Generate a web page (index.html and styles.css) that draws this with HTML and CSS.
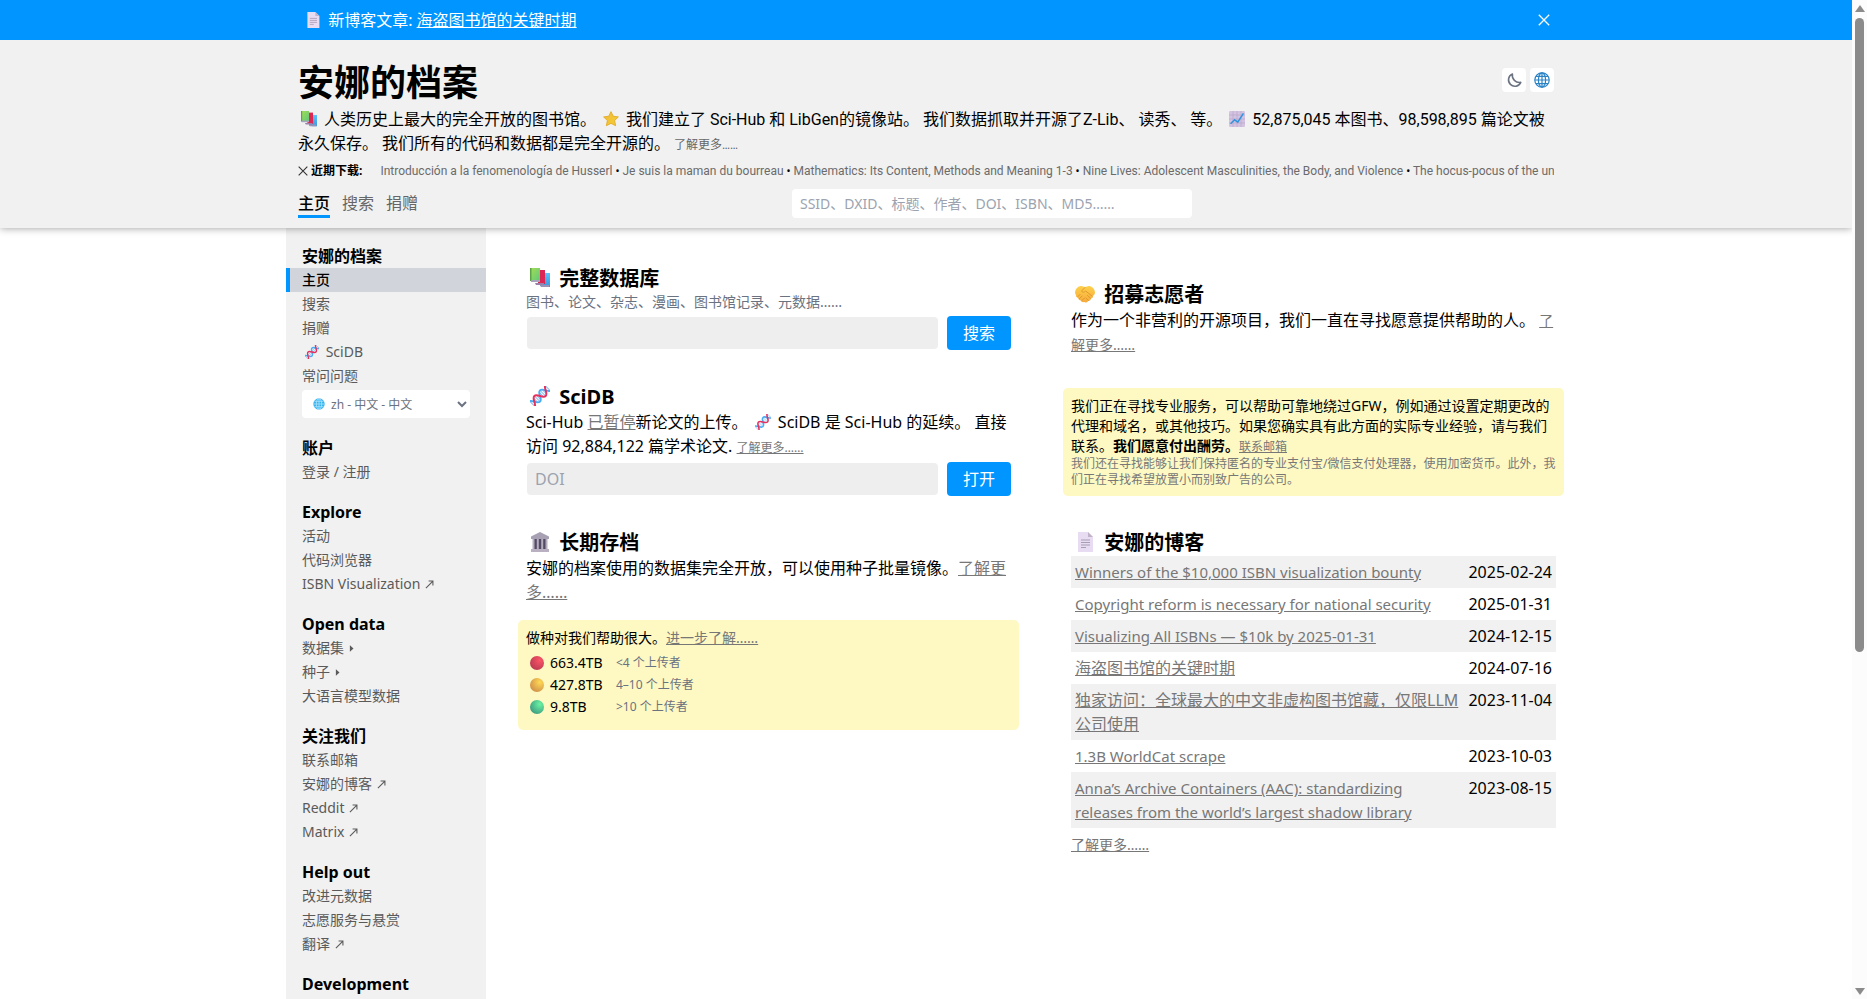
FILE: index.html
```html
<!DOCTYPE html>
<html lang="zh-CN">
<head>
<meta charset="utf-8">
<title>安娜的档案</title>
<link rel="stylesheet" href="styles.css">
</head>
<body>
<svg class="defs" aria-hidden="true">
  <defs>
    <linearGradient id="g-green" x1="0" y1="0" x2="1" y2="1"><stop offset="0" stop-color="#a5dd55"/><stop offset="1" stop-color="#5fc97a"/></linearGradient>
    <linearGradient id="g-blue" x1="0" y1="0" x2="0" y2="1"><stop offset="0" stop-color="#5cc4fb"/><stop offset="1" stop-color="#3a97dc"/></linearGradient>
    <linearGradient id="g-star" x1="0" y1="0" x2="1" y2="1"><stop offset="0" stop-color="#f0b83c"/><stop offset="1" stop-color="#f5cf31"/></linearGradient>
    <linearGradient id="g-hand" x1="0" y1="0" x2="0" y2="1"><stop offset="0" stop-color="#ffd04a"/><stop offset="1" stop-color="#f5ab3a"/></linearGradient>
    <radialGradient id="g-red-dot" cx=".7" cy=".3" r=".8"><stop offset="0" stop-color="#fb5566"/><stop offset="1" stop-color="#b93a52"/></radialGradient>
    <radialGradient id="g-yellow-dot" cx=".7" cy=".3" r=".8"><stop offset="0" stop-color="#ffd955"/><stop offset="1" stop-color="#cf8f4a"/></radialGradient>
    <radialGradient id="g-green-dot" cx=".7" cy=".3" r=".8"><stop offset="0" stop-color="#6bf3a2"/><stop offset="1" stop-color="#3d9a80"/></radialGradient>
    <symbol id="i-doc" viewBox="0 0 20 20"><path d="M3 0h10l5 5v15H3z" fill="#e7dcf1"/><path d="M13 0l5 5h-5z" fill="#bfb2c9"/><path d="M6 8h9M6 10.500h9M6 13h9M6 15.500h5" stroke="#a99cb5" stroke-width="1"/></symbol>
    <symbol id="i-books" viewBox="0 0 20 20"><path d="M12 5h8v14h-6l-4-1z" fill="url(#g-blue)"/><path d="M10 17h9v2h-8z" fill="#9a93b8"/><path d="M8 2h7v14H8z" fill="#dc2755"/><path d="M5 15h9v2H6z" fill="#9a7fa8"/><path d="M0 0h10v13H0z" fill="url(#g-green)"/><path d="M0 0h1.500v13H0z" fill="#5ba345"/><path d="M1 12h9v2H1z" fill="#a7a5bd"/></symbol>
    <symbol id="i-star" viewBox="0 0 20 20"><path d="M10 .8l2.800 5.800 6.400.8-4.700 4.500 1.300 6.500-5.800-3-5.800 3 1.300-6.500L.8 7.400l6.400-.8z" fill="url(#g-star)" stroke="#e2ad2c" stroke-width="1.200" stroke-linejoin="round"/></symbol>
    <symbol id="i-chart" viewBox="0 0 20 20"><rect width="20" height="20" rx="1.500" fill="#d3c3e0"/><path d="M5 0v20M10 0v20M15 0v20M0 5h20M0 10h20M0 15h20" stroke="#b7a5c9" stroke-width=".8"/><path d="M2 16l5-5 4 3 7-11" fill="none" stroke="#3294df" stroke-width="2"/></symbol>
    <symbol id="i-dna" viewBox="0 0 20 20"><g transform="rotate(-45 10 10)" fill="none"><path d="M-1 7v6M4 7v6M6 7v6M8 8v4M12 8v4M14 7v6M16 7v6M21 7v6" stroke="#8fbdf0" stroke-width="1"/><path d="M-2 6C2 6 2 14 6 14S10 6 14 6S18 14 22 14" stroke="#4aacf5" stroke-width="2"/><path d="M-2 14C2 14 2 6 6 6S10 14 14 14S18 6 22 6" stroke="#e4325f" stroke-width="2"/></g></symbol>
    <symbol id="i-bank" viewBox="0 0 20 20"><path d="M10 0l9 4.500V7H1V4.500z" fill="#a8a1b4"/><path d="M3 7h14v10H3z" fill="#554a66"/><path d="M3.500 7v10M7.800 7v10M12.200 7v10M16.500 7v10" stroke="#b5aebe" stroke-width="2"/><path d="M1 17h18v3H1z" fill="#b9b1c2"/></symbol>
    <symbol id="i-hands" viewBox="0 0 20 20"><path d="M0 8.500C.3 5 2.500 2.500 5.500 2c2-.2 3 .8 4.500 1C11.500 2.800 12.500 1.800 14.500 2c3 .5 5.200 3 5.500 6.500 0 1.500-1 2.500-2 3.300.3 1.600-.8 2.700-2.200 2.900-.2 1.500-1.400 2.300-2.700 2.200-.8 1.500-2.500 1.900-4 1.100-1.500.5-2.800-.3-3.200-1.500-1.600 0-2.600-1-2.700-2.500C1.500 13.500.8 12.500 1 11 .4 10.300 0 9.500 0 8.500z" fill="url(#g-hand)"/><path d="M10 3.500L6.500 7c.8 1.800 2.800 1.500 4.200 0l6.300 5M3 12.500l2-2M4.500 14.500l2.500-2.500M7 16.500l2.500-2.500M11 14l2.500 2.500M12.500 11.500l3 2.800" fill="none" stroke="#dd9430" stroke-width=".9" stroke-linecap="round"/></symbol>
    <symbol id="i-globe" viewBox="0 0 20 20"><circle cx="10" cy="10" r="9" fill="#fff"/><g fill="none" stroke="#2b83c6" stroke-width="1.500"><circle cx="10" cy="10" r="9"/><ellipse cx="10" cy="10" rx="4.500" ry="9"/><path d="M10 1v18M1 10h18M2.500 5.500h15M2.500 14.500h15"/></g></symbol>
    <symbol id="i-globe-solid" viewBox="0 0 20 20"><circle cx="10" cy="10" r="9.500" fill="#36b4f0"/><g fill="none" stroke="#b5e8ff" stroke-width="1.200"><ellipse cx="10" cy="10" rx="4.500" ry="9"/><path d="M10 1v18M1 10h18M2.500 5.500h15M2.500 14.500h15"/></g></symbol>
    <symbol id="i-moon" viewBox="0 0 20 20"><path d="M8 2.500A8 8 0 1 0 18.500 13 9 9 0 0 1 8 2.500z" fill="none" stroke="#6b7280" stroke-width="2" stroke-linejoin="round"/></symbol>
    <symbol id="i-x" viewBox="0 0 12 12"><path d="M.8.800l10.400 10.400M11.200.800L.8 11.200" fill="none" stroke="currentColor" stroke-width="1.300"/></symbol>
    <symbol id="i-ne" viewBox="0 0 10 10"><path d="M1 9l7.500-7.500M4 1.200h4.800V6" fill="none" stroke="currentColor" stroke-width="1.200"/></symbol>
    <symbol id="i-tri" viewBox="0 0 10 10"><path d="M1 1.500L5 5 1 8.500z" fill="currentColor"/></symbol>
  </defs>
</svg>
<div class="viewport">
  <div class="page">
    <div class="banner">
      <div class="banner-inner">
        <span><svg class="em"><use href="#i-doc"/></svg> 新博客文章: <a href="#">海盗图书馆的关键时期</a></span>
        <button class="close" aria-label="关闭"><svg><use href="#i-x"/></svg></button>
      </div>
    </div>
    <header class="header">
      <div class="header-inner">
        <div class="title-row">
          <h1>安娜的档案</h1>
          <div class="tools">
            <button aria-label="深色模式"><svg><use href="#i-moon"/></svg></button>
            <button aria-label="语言"><svg><use href="#i-globe"/></svg></button>
          </div>
        </div>
        <p class="tagline"><svg class="em"><use href="#i-books"/></svg> 人类历史上最大的完全开放的图书馆。 <svg class="em"><use href="#i-star"/></svg> 我们建立了 Sci-Hub 和 LibGen的镜像站。 我们数据抓取并开源了Z-Lib、 读秀、 等。 <svg class="em"><use href="#i-chart"/></svg> 52,875,045 本图书、98,598,895 篇论文被永久保存。 我们所有的代码和数据都是完全开源的。 <a class="more" href="#">了解更多……</a></p>
        <div class="recent">
          <button class="recent-x" aria-label="隐藏"><svg><use href="#i-x"/></svg></button>
          <strong>近期下载:</strong>
          <div class="ticker"><a href="#">Introducción a la fenomenología de Husserl</a> • <a href="#">Je suis la maman du bourreau</a> • <a href="#">Mathematics: Its Content, Methods and Meaning 1-3</a> • <a href="#">Nine Lives: Adolescent Masculinities, the Body, and Violence</a> • <a href="#">The hocus-pocus of the un</a></div>
        </div>
        <div class="bar">
          <nav class="tabs"><a class="on" href="#">主页</a><a href="#">搜索</a><a href="#">捐赠</a></nav>
          <input class="search" type="text" aria-label="搜索" placeholder="SSID、DXID、标题、作者、DOI、ISBN、MD5……">
        </div>
      </div>
    </header>
    <div class="body">
      <aside class="side">
        <section>
          <h2>安娜的档案</h2>
          <a class="on" href="#">主页</a>
          <a href="#">搜索</a>
          <a href="#">捐赠</a>
          <a href="#"><svg class="em"><use href="#i-dna"/></svg> SciDB</a>
          <a href="#">常问问题</a>
          <div class="lang"><svg class="lang-icon"><use href="#i-globe-solid"/></svg><select aria-label="语言"><option>zh - 中文 - 中文</option></select></div>
        </section>
        <section><h2>账户</h2><a href="#">登录 / 注册</a></section>
        <section><h2>Explore</h2><a href="#">活动</a><a href="#">代码浏览器</a><a href="#">ISBN Visualization <svg class="mark"><use href="#i-ne"/></svg></a></section>
        <section><h2>Open data</h2><a href="#">数据集 <svg class="mark"><use href="#i-tri"/></svg></a><a href="#">种子 <svg class="mark"><use href="#i-tri"/></svg></a><a href="#">大语言模型数据</a></section>
        <section><h2>关注我们</h2><a href="#">联系邮箱</a><a href="#">安娜的博客 <svg class="mark"><use href="#i-ne"/></svg></a><a href="#">Reddit <svg class="mark"><use href="#i-ne"/></svg></a><a href="#">Matrix <svg class="mark"><use href="#i-ne"/></svg></a></section>
        <section><h2>Help out</h2><a href="#">改进元数据</a><a href="#">志愿服务与悬赏</a><a href="#">翻译 <svg class="mark"><use href="#i-ne"/></svg></a></section>
        <section><h2>Development</h2></section>
      </aside>
      <main class="main">
        <div class="col">
          <section class="block">
            <h3><svg class="em"><use href="#i-books"/></svg> 完整数据库</h3>
            <p class="sub">图书、论文、杂志、漫画、图书馆记录、元数据……</p>
            <form class="form"><input type="text" aria-label="搜索"><button type="button">搜索</button></form>
          </section>
          <section class="block">
            <h3><svg class="em"><use href="#i-dna"/></svg> SciDB</h3>
            <p>Sci-Hub <a href="#">已暂停</a>新论文的上传。 <svg class="em"><use href="#i-dna"/></svg> SciDB 是 Sci-Hub 的延续。 直接访问 92,884,122 篇学术论文. <a class="tiny" href="#">了解更多……</a></p>
            <form class="form"><input type="text" aria-label="DOI" placeholder="DOI"><button type="button">打开</button></form>
          </section>
          <section class="block">
            <h3><svg class="em"><use href="#i-bank"/></svg> 长期存档</h3>
            <p>安娜的档案使用的数据集完全开放，可以使用种子批量镜像。<a href="#">了解更多……</a></p>
            <div class="note seeds">
              <p>做种对我们帮助很大。<a href="#">进一步了解……</a></p>
              <ul>
                <li><svg class="dot"><circle cx="7" cy="7" r="7" fill="url(#g-red-dot)"/></svg><span class="size">663.4TB</span><small>&lt;4 个上传者</small></li>
                <li><svg class="dot"><circle cx="7" cy="7" r="7" fill="url(#g-yellow-dot)"/></svg><span class="size">427.8TB</span><small>4–10 个上传者</small></li>
                <li><svg class="dot"><circle cx="7" cy="7" r="7" fill="url(#g-green-dot)"/></svg><span class="size">9.8TB</span><small>&gt;10 个上传者</small></li>
              </ul>
            </div>
          </section>
        </div>
        <div class="col right">
          <section class="block volunteer">
            <h3><svg class="em"><use href="#i-hands"/></svg> 招募志愿者</h3>
            <p>作为一个非营利的开源项目，我们一直在寻找愿意提供帮助的人。 <a class="small" href="#">了解更多……</a></p>
          </section>
          <div class="note pro">
            <p>我们正在寻找专业服务，可以帮助可靠地绕过GFW，例如通过设置定期更改的代理和域名，或其他技巧。如果您确实具有此方面的实际专业经验，请与我们联系。<strong>我们愿意付出酬劳。</strong><a class="tiny" href="#">联系邮箱</a></p>
            <p class="fine">我们还在寻找能够让我们保持匿名的专业支付宝/微信支付处理器，使用加密货币。此外，我们正在寻找希望放置小而别致广告的公司。</p>
          </div>
          <section class="block">
            <h3><svg class="em"><use href="#i-doc"/></svg> 安娜的博客</h3>
            <table class="posts">
              <tr><td><a class="latin" href="#">Winners of the $10,000 ISBN visualization bounty</a></td><td>2025-02-24</td></tr>
              <tr><td><a class="latin" href="#">Copyright reform is necessary for national security</a></td><td>2025-01-31</td></tr>
              <tr><td><a class="latin" href="#">Visualizing All ISBNs — $10k by 2025-01-31</a></td><td>2024-12-15</td></tr>
              <tr><td><a href="#">海盗图书馆的关键时期</a></td><td>2024-07-16</td></tr>
              <tr><td><a href="#">独家访问：全球最大的中文非虚构图书馆藏，仅限LLM公司使用</a></td><td>2023-11-04</td></tr>
              <tr><td><a class="latin" href="#">1.3B WorldCat scrape</a></td><td>2023-10-03</td></tr>
              <tr><td><a class="latin" href="#">Anna’s Archive Containers (AAC): standardizing releases from the world’s largest shadow library</a></td><td>2023-08-15</td></tr>
            </table>
            <p class="after"><a class="small" href="#">了解更多……</a></p>
          </section>
        </div>
      </main>
    </div>
  </div>
  <div class="scrollbar" aria-hidden="true"><i class="up"></i><i class="thumb"></i><i class="down"></i></div>
</div>
</body>
</html>
```

FILE: styles.css
```css
* { box-sizing: border-box; }
body {
  margin: 0;
  color: #000;
  background: #fff;
  font: 16px/24px "Noto Sans", "Noto Sans CJK SC", sans-serif;
}
h1, h2, h3, p, ul { margin: 0; padding: 0; }
a { color: inherit; }
button, input, select { font: inherit; margin: 0; border: 0; }
.defs { position: absolute; width: 0; height: 0; }
.viewport { display: flex; height: 100vh; overflow: hidden; }
.page { flex: 1; min-width: 0; }
.em { width: 1em; height: 1em; margin: 0 3px 0 3px; vertical-align: -2px; }

.banner { background: #0095ff; color: #fff; }
.banner-inner {
  display: flex;
  justify-content: space-between;
  align-items: center;
  max-width: 1280px;
  height: 40px;
  margin: 0 auto;
  padding: 0 16px;
}
.close { display: flex; padding: 0; background: none; color: #fff; }
.close svg { width: 12px; height: 12px; }

.header { position: relative; background: #f1f1f1; box-shadow: 0 0 8px rgba(0, 0, 0, .4); clip-path: inset(0 0 -12px 0); }
.header-inner { max-width: 1280px; margin: 0 auto; padding: 20px 12px 10px; }
.title-row { display: flex; justify-content: space-between; height: 48px; }
h1 { padding-top: 3px; font-size: 36px; line-height: 40px; font-weight: 700; }
.tools { display: flex; gap: 4px; padding-top: 8px; }
.tools button {
  display: flex;
  align-items: center;
  justify-content: center;
  width: 24px;
  height: 24px;
  padding: 0;
  background: #fff;
  border-radius: 4px;
}
.tools svg { width: 16px; height: 16px; }
.tagline { font-family: Roboto, "Noto Sans CJK SC", sans-serif; }
.more { color: #666; font-size: 12px; line-height: 1; text-decoration: none; }
.recent { display: flex; align-items: center; height: 30px; font-size: 12px; }
.recent-x { display: flex; padding: 0; margin-right: 3px; background: none; color: #333; }
.recent-x svg { width: 10px; height: 10px; }
.ticker {
  flex: 1;
  min-width: 0;
  margin-left: 18px;
  overflow: hidden;
  white-space: nowrap;
  font-family: Roboto, "Noto Sans", sans-serif;
}
.ticker a { color: #6b6b6b; text-decoration: none; }
.bar { display: grid; grid-template-columns: 494fr 400px 362fr; align-items: end; height: 32px; }
.tabs { display: flex; gap: 12px; }
.tabs a { color: #666; text-decoration: none; border-bottom: 3px solid transparent; }
.tabs .on { color: #000; font-weight: 500; border-color: #0095ff; }
.search { width: 100%; height: 29px; padding: 0 8px; font-size: 14px; background: #fff; border-radius: 4px; }
::placeholder { color: #9ca3af; opacity: 1; }

.body { display: flex; max-width: 1280px; margin: 0 auto; }
.side { width: 200px; min-height: calc(100vh - 228px); padding-top: 16px; background: #f1f1f1; }
.side section { margin-bottom: 16px; }
.side h2 { padding: 0 16px; font-size: 16px; line-height: 24px; font-weight: 700; }
.side a {
  display: block;
  padding: 0 12px;
  border-left: 4px solid transparent;
  color: #5a5a5a;
  font-size: 14px;
  text-decoration: none;
}
.side .on { background: #d1d5db; border-color: #0095ff; color: #000; font-weight: 500; }
.mark { width: 9px; height: 9px; margin-left: 1px; }
.lang {
  display: flex;
  align-items: center;
  height: 28px;
  margin: 2px 16px 18px;
  padding: 0 0 0 11px;
  background: #fff;
  border-radius: 4px;
}
.lang-icon { flex: none; width: 12px; height: 12px; }
.lang select { flex: 1; min-width: 0; height: 28px; padding: 0 0 0 2px; color: #6b7280; background: none; font-size: 12px; }

.main {
  flex: 1;
  min-width: 0;
  display: grid;
  grid-template-columns: 1fr 1fr;
  gap: 44px;
  align-items: start;
  padding: 38px 2px 0 32px;
}
.block { padding: 0 8px; margin-bottom: 34px; }
.right { padding-top: 16px; }
h3 { font-size: 20px; line-height: 26px; font-weight: 700; }
h3 .em { margin: 0 4px 0 4px; }
.block a, .note a { color: #777; }
.sub { color: #6b7280; font-size: 14px; line-height: 20px; }
.block .tiny, .note .tiny { font-size: 12px; line-height: 1; }
.small { font-size: 14px; line-height: 1; }
.latin { font-size: 15px; }
.form { display: flex; align-items: center; gap: 9px; margin-top: 4px; padding-left: 1px; }
.form input { flex: 1; min-width: 0; height: 32px; padding: 0 8px; background: #eee; border-radius: 4px; }
.form button { width: 64px; height: 34px; padding: 0; color: #fff; background: #0095ff; border-radius: 4px; }
.note { padding: 8px; background: #fef9c3; border-radius: 5px; font-size: 14px; line-height: 20px; }
.seeds { margin: 16px -8px 0; padding-bottom: 12px; }
.seeds ul { margin-top: 4px; list-style: none; }
.seeds li { display: flex; align-items: center; height: 22px; padding-left: 4px; }
.dot { width: 14px; height: 14px; margin-right: 6px; }
.size { width: 66px; }
.seeds small { color: #6b7280; font-size: 12px; }
.volunteer { margin-bottom: 32px; }
.pro { margin-bottom: 34px; }
.fine { color: #777; font-size: 12px; line-height: 16px; }
.posts { width: 100%; border-collapse: collapse; }
.posts td { padding: 4px; vertical-align: top; }
.posts td + td { white-space: nowrap; }
.posts tr:nth-child(odd) { background: #f1f1f1; }
.after { margin-top: 4px; }

.scrollbar { display: flex; flex-direction: column; align-items: center; width: 15px; padding: 5px 0 4px; background: #fcfcfc; }
.up, .down { border: 5px solid transparent; }
.up { border-top: 0; border-bottom: 7px solid #8b8b8b; }
.down { border-bottom: 0; border-top: 7px solid #8b8b8b; margin-top: auto; }
.thumb { width: 9px; height: 64%; margin-top: 6px; background: #8b8b8b; border-radius: 5px; }
```
